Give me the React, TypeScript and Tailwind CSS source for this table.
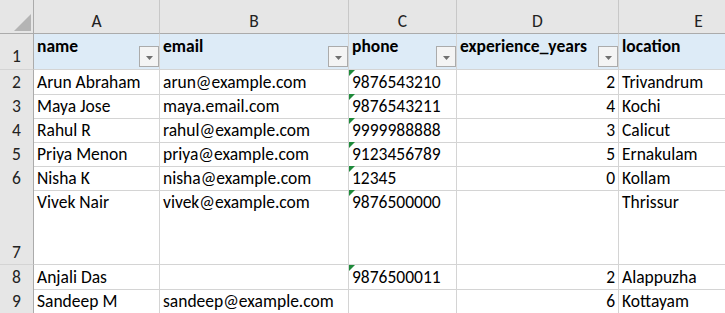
type Row = {
  n: number;
  h: string;
  name: string;
  email: string;
  phone: string;
  years: string;
  location: string;
};

const rows: Row[] = [
  { n: 2, h: "h-[24px]", name: "Arun Abraham", email: "arun@example.com", phone: "9876543210", years: "2", location: "Trivandrum" },
  { n: 3, h: "h-[24px]", name: "Maya Jose", email: "maya.email.com", phone: "9876543211", years: "4", location: "Kochi" },
  { n: 4, h: "h-[24px]", name: "Rahul R", email: "rahul@example.com", phone: "9999988888", years: "3", location: "Calicut" },
  { n: 5, h: "h-[24px]", name: "Priya Menon", email: "priya@example.com", phone: "9123456789", years: "5", location: "Ernakulam" },
  { n: 6, h: "h-[24px]", name: "Nisha K", email: "nisha@example.com", phone: "12345", years: "0", location: "Kollam" },
  { n: 7, h: "h-[75px]", name: "Vivek Nair", email: "vivek@example.com", phone: "9876500000", years: "", location: "Thrissur" },
  { n: 8, h: "h-[24px]", name: "Anjali Das", email: "", phone: "9876500011", years: "2", location: "Alappuzha" },
  { n: 9, h: "h-[24px]", name: "Sandeep M", email: "sandeep@example.com", phone: "", years: "6", location: "Kottayam" },
];

const cols = ["A", "B", "C", "D", "E"];
const grid = "grid grid-cols-[34px_126px_189px_108px_162px_160px]";

function FilterButton() {
  return (
    <div className="mb-[2px] flex h-[21px] w-[20px] shrink-0 items-center justify-center self-end border border-[#ababab] bg-[#f4f4f4]">
      <svg width="7" height="4" viewBox="0 0 7 4" className="mt-[2px]">
        <polygon points="0,0 7,0 3.5,4" fill="#6f6f6f" />
      </svg>
    </div>
  );
}

function TextFlag() {
  // 数値が文字列として入っているセルの緑の三角
  return (
    <svg width="6" height="6" viewBox="0 0 6 6" className="absolute left-0 top-0">
      <polygon points="0,0 6,0 0,6" fill="#1f8a3b" />
    </svg>
  );
}

export default function App() {
  return (
    <div className="h-[313px] w-[725px] overflow-hidden bg-white text-[17.5px] leading-[23px] text-black [font-family:Carlito,Lato,'Liberation_Sans',sans-serif]">
      {/* 列見出し */}
      <div className={`${grid} h-[34px] bg-[#e6e6e6] text-[#222]`}>
        <div className="relative border-b border-r border-[#ababab]">
          <svg width="17" height="17" viewBox="0 0 17 17" className="absolute left-[14px] top-[14px]">
            <polygon points="17,0 17,17 0,17" fill="#b4b4b4" />
          </svg>
        </div>
        {cols.map((c) => (
          <div key={c} className="flex items-end justify-center border-b border-r border-b-[#ababab] border-r-[#c8c8c8]">
            {c}
          </div>
        ))}
      </div>

      {/* テーブル見出し行 */}
      <div className={`${grid} h-[36px]`}>
        <div className="flex items-end justify-center border-b border-r border-b-[#d4d4d4] border-r-[#ababab] bg-[#e6e6e6] pb-px text-[#222]">
          1
        </div>
        {["name", "email", "phone", "experience_years", "location"].map((t) => (
          <div key={t} className="flex justify-between border-b border-r border-[#d4d4d4] bg-[#ddebf7] pl-[3px] pt-px font-bold">
            <span className="whitespace-nowrap">{t}</span>
            <FilterButton />
          </div>
        ))}
      </div>

      {rows.map((r) => (
        <div key={r.n} className={`${grid} ${r.h}`}>
          <div className="flex items-end justify-center border-b border-r border-b-[#d4d4d4] border-r-[#ababab] bg-[#e6e6e6] text-[#222]">
            {r.n}
          </div>
          <div className="whitespace-nowrap border-b border-r border-[#d4d4d4] pl-[3px] pt-px">{r.name}</div>
          <div className="whitespace-nowrap border-b border-r border-[#d4d4d4] pl-[3px] pt-px">{r.email}</div>
          <div className="relative whitespace-nowrap border-b border-r border-[#d4d4d4] pl-[3px] pt-px">
            {r.phone && <TextFlag />}
            {r.phone}
          </div>
          <div className="whitespace-nowrap border-b border-r border-[#d4d4d4] pr-[3px] pt-px text-right">{r.years}</div>
          <div className="whitespace-nowrap border-b border-r border-[#d4d4d4] pl-[3px] pt-px">{r.location}</div>
        </div>
      ))}
    </div>
  );
}
